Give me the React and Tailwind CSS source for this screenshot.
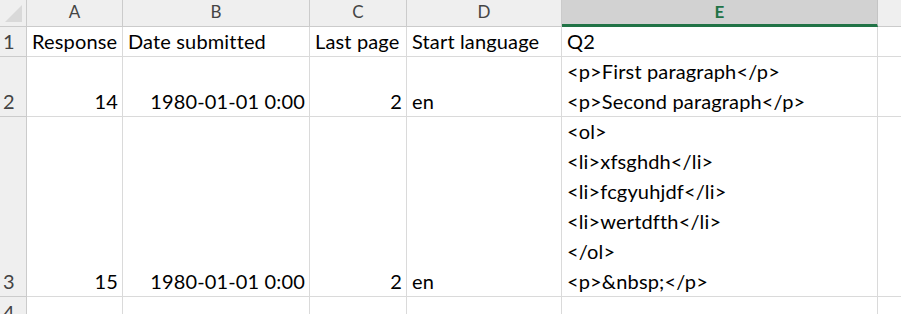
import React from 'react';

const cols = ['A', 'B', 'C', 'D', 'E'];

const rows = [
  {
    n: 1,
    cells: [
      { t: ['Response'] },
      { t: ['Date submitted'] },
      { t: ['Last page'] },
      { t: ['Start language'] },
      { t: ['Q2'] },
    ],
  },
  {
    n: 2,
    cells: [
      { t: ['14'], num: true },
      { t: ['1980-01-01 0:00'], num: true },
      { t: ['2'], num: true },
      { t: ['en'] },
      { t: ['<p>First paragraph</p>', '<p>Second paragraph</p>'] },
    ],
  },
  {
    n: 3,
    cells: [
      { t: ['15'], num: true },
      { t: ['1980-01-01 0:00'], num: true },
      { t: ['2'], num: true },
      { t: ['en'] },
      {
        t: [
          '<ol>',
          '<li>xfsghdh</li>',
          '<li>fcgyuhjdf</li>',
          '<li>wertdfth</li>',
          '</ol>',
          '<p>&nbsp;</p>',
        ],
      },
    ],
  },
];

function Cell({ cell }) {
  return (
    <div
      className={`flex flex-col justify-end overflow-hidden whitespace-nowrap border-r border-b border-[#dadada] ${
        cell.num ? 'items-end pr-[4px]' : 'items-start pl-[5px]'
      }`}
    >
      {cell.t.map((line, i) => (
        <div key={i} className="shrink-0 leading-[30px] tracking-[0.15px]">
          {line}
        </div>
      ))}
    </div>
  );
}

function RowNum({ n, last }) {
  return (
    <div
      className={`overflow-hidden bg-[#efefef] pl-[3px] text-[#444] border-r border-[#cbcbcb] ${
        last ? '' : 'border-b'
      } flex flex-col justify-end`}
    >
      <div className="shrink-0 leading-[30px]">{n}</div>
    </div>
  );
}

export default function App() {
  return (
    <div className="w-[901px] h-[314px] overflow-hidden bg-white font-['Lato',sans-serif] text-[20px] text-black">
      <div className="grid grid-cols-[27px_96px_187px_97px_155px_316px_1fr] grid-rows-[27px_30px_60px_180px_30px]">
        {/* Corner */}
        <div className="bg-[#efefef] border-r border-b border-[#cbcbcb]">
          <svg width="26" height="26" viewBox="0 0 26 26">
            <polygon points="22,5 22,22 5,22" fill="#d9d9d9" />
          </svg>
        </div>

        {/* Column headers */}
        {cols.map((c) =>
          c === 'E' ? (
            <div
              key={c}
              className="bg-[#d2d2d2] border-r border-[#c4c4c4] border-b-[3px] border-b-[#217346] text-center text-[17px] leading-[24px] font-bold text-[#217346]"
            >
              {c}
            </div>
          ) : (
            <div
              key={c}
              className="bg-[#efefef] border-r border-b border-[#cbcbcb] text-center text-[17px] leading-[24px] text-[#444]"
            >
              {c}
            </div>
          )
        )}
        <div className="bg-[#efefef] border-b border-[#cbcbcb]" />

        {/* Data rows */}
        {rows.map((r) => (
          <React.Fragment key={r.n}>
            <RowNum n={r.n} />
            {r.cells.map((cell, i) => (
              <Cell key={i} cell={cell} />
            ))}
            <div className="border-b border-[#dadada]" />
          </React.Fragment>
        ))}

        {/* Row 4, cut off by the window */}
        <RowNum n={4} last />
        {cols.map((c) => (
          <div key={c} className="border-r border-[#dadada]" />
        ))}
        <div />
      </div>
    </div>
  );
}
